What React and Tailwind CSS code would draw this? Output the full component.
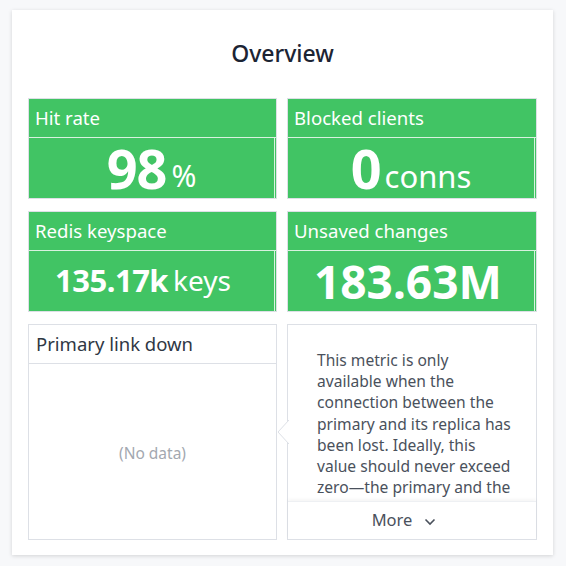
import React from "react";

function Stat({ title, value, unit, valueClass, unitClass, justify = "justify-center", pad = "" }) {
  return (
    <div className="flex flex-col h-[101px] border border-[#dde0e6] bg-[#41c464]">
      <div className="h-[39px] flex items-center px-[6px] border-b border-[#d8f2df] text-white text-[18.6px]">
        {title}
      </div>
      <div className={`flex-1 flex items-end ${justify} ${pad} text-white border-r border-[#d8f2df] mr-[1px]`}>
        <span className={valueClass}>{value}</span>
        {unit && <span className={unitClass}>{unit}</span>}
      </div>
    </div>
  );
}

export default function App() {
  return (
    <div
      className="w-[566px] h-[566px] bg-[#f7f8fa] pt-[10px] pl-[12px]"
      style={{ fontFamily: '"Noto Sans", "Open Sans", sans-serif' }}
    >
      <div className="w-[541px] h-[545px] bg-white shadow-[0_1px_4px_rgba(0,0,0,0.15)] px-[16px] flex flex-col">
        <div className="h-[88px] flex items-center justify-center pb-[2px] text-[23px] font-medium text-[#1c2433]">
          Overview
        </div>
        <div className="grid grid-cols-[249px_250px] gap-x-[10px] gap-y-[12px]">
          <Stat
            title="Hit rate"
            value="98"
            unit="%"
            pad="pb-[1px]"
            valueClass="text-[54px] font-bold leading-[58px] tracking-[-1px]"
            unitClass="text-[30px] leading-[42px] ml-[5px]"
          />
          <Stat
            title="Blocked clients"
            value="0"
            unit="conns"
            pad="pb-[1px]"
            valueClass="text-[54px] font-bold leading-[58px]"
            unitClass="text-[31px] leading-[42px] ml-[3px]"
          />
          <Stat
            title="Redis keyspace"
            value="135.17k"
            unit="keys"
            justify="justify-start"
            pad="pl-[26px] pb-[12px]"
            valueClass="text-[31px] font-bold leading-[38px] tracking-[-0.5px]"
            unitClass="text-[28px] leading-[38px] ml-[5px]"
          />
          <Stat
            title="Unsaved changes"
            value="183.63M"
            justify="justify-start"
            pad="pl-[26px] pb-[4px]"
            valueClass="text-[46px] font-bold leading-[52px]"
          />
          <div className="h-[216px] border border-[#dde0e6] flex flex-col">
            <div className="h-[39px] flex items-center px-[7px] border-b border-[#dde0e6] text-[18.5px] text-[#2f3744]">
              Primary link down
            </div>
            <div className="flex-1 flex items-center justify-center pt-[4px] text-[15.5px] text-[#a3a8b0]">
              (No data)
            </div>
          </div>
          <div className="relative h-[216px] border border-[#dde0e6] bg-white">
            <svg
              className="absolute left-[-11px] top-[95px]"
              width="12"
              height="24"
              viewBox="0 0 12 24"
            >
              <polygon points="12,0 1,12 12,24" fill="white" />
              <polyline points="12,0 1,12 12,24" fill="none" stroke="#dde0e6" strokeWidth="1" />
            </svg>
            <div className="h-[176px] overflow-hidden pl-[29px] pr-[22px] pt-[25px] text-[15.6px] leading-[21.2px] text-[#4a515c]">
              This metric is only available when the connection between the primary and its replica has been lost. Ideally, this value should never exceed zero—the primary and the replica should always be in constant communication.
            </div>
            <div className="absolute left-0 right-0 bottom-0 h-[38px] bg-white shadow-[0_-2px_3px_rgba(0,0,0,0.04)] border-t border-[#eef0f3] flex items-center justify-center pr-[16px] text-[16.5px] text-[#4a515c]">
              <span>More</span>
              <svg className="ml-[12px] mt-[2px]" width="12" height="8" viewBox="0 0 12 8">
                <polyline points="1.5,1.5 6,6 10.5,1.5" fill="none" stroke="#4a515c" strokeWidth="1.6" />
              </svg>
            </div>
          </div>
        </div>
      </div>
    </div>
  );
}
